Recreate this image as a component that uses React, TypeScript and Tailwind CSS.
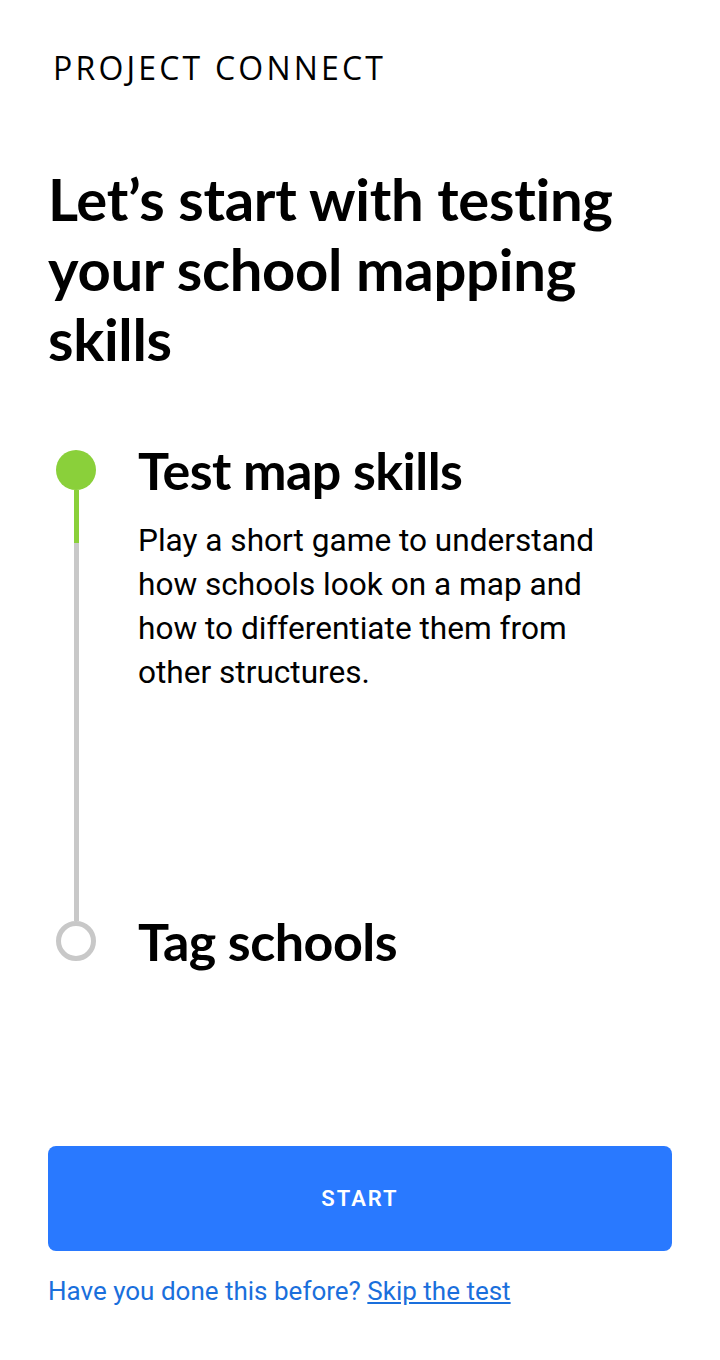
export default function App() {
  return (
    <div className="w-[720px] h-[1360px] bg-white flex flex-col px-12 font-['Roboto',sans-serif] text-black">
      {/* Brand */}
      <div className="pt-[50px] pl-[5px] font-['Open_Sans',sans-serif] text-[32px] leading-[36px] tracking-[0.1em] font-normal">
        PROJECT CONNECT
      </div>

      {/* Heading */}
      <h1 className="mt-[78px] font-['Lato',sans-serif] font-bold text-[58px] leading-[70px] tracking-[-0.005em]">
        Let’s start with testing your school mapping skills
      </h1>

      {/* Steps */}
      <div className="mt-[76px] flex">
        <div className="w-[56px] flex flex-col items-center">
          <div className="w-[40px] h-[40px] rounded-full bg-[#8ad03a]" />
          <div className="w-[5px] h-[53px] bg-[#8ad03a]" />
          <div className="w-[5px] h-[378px] bg-[#c8c8c8]" />
          <div className="w-[40px] h-[40px] rounded-full border-[5px] border-[#c8c8c8]" />
        </div>
        <div className="flex-1 pl-[34px]">
          <div className="h-[471px]">
            <h2 className="font-['Lato',sans-serif] font-bold text-[52px] leading-[40px] tracking-[-0.01em] whitespace-nowrap">
              Test map skills
            </h2>
            <p className="mt-[29px] w-[490px] text-[31.6px] leading-[44px]">
              Play a short game to understand how schools look on a map and how to differentiate them from other structures.
            </p>
          </div>
          <h2 className="font-['Lato',sans-serif] font-bold text-[52px] leading-[40px] tracking-[-0.01em] whitespace-nowrap">
            Tag schools
          </h2>
        </div>
      </div>

      {/* Actions */}
      <button
        type="button"
        className="mt-[185px] h-[105px] w-full rounded-lg bg-[#2979ff] text-white text-[22px] font-semibold tracking-[0.09em]"
      >
        START
      </button>
      <p className="mt-[24px] text-[26px] leading-[32px] text-[#1a6fdc]">
        Have you done this before? <a href="#" className="underline">Skip the test</a>
      </p>
    </div>
  );
}
